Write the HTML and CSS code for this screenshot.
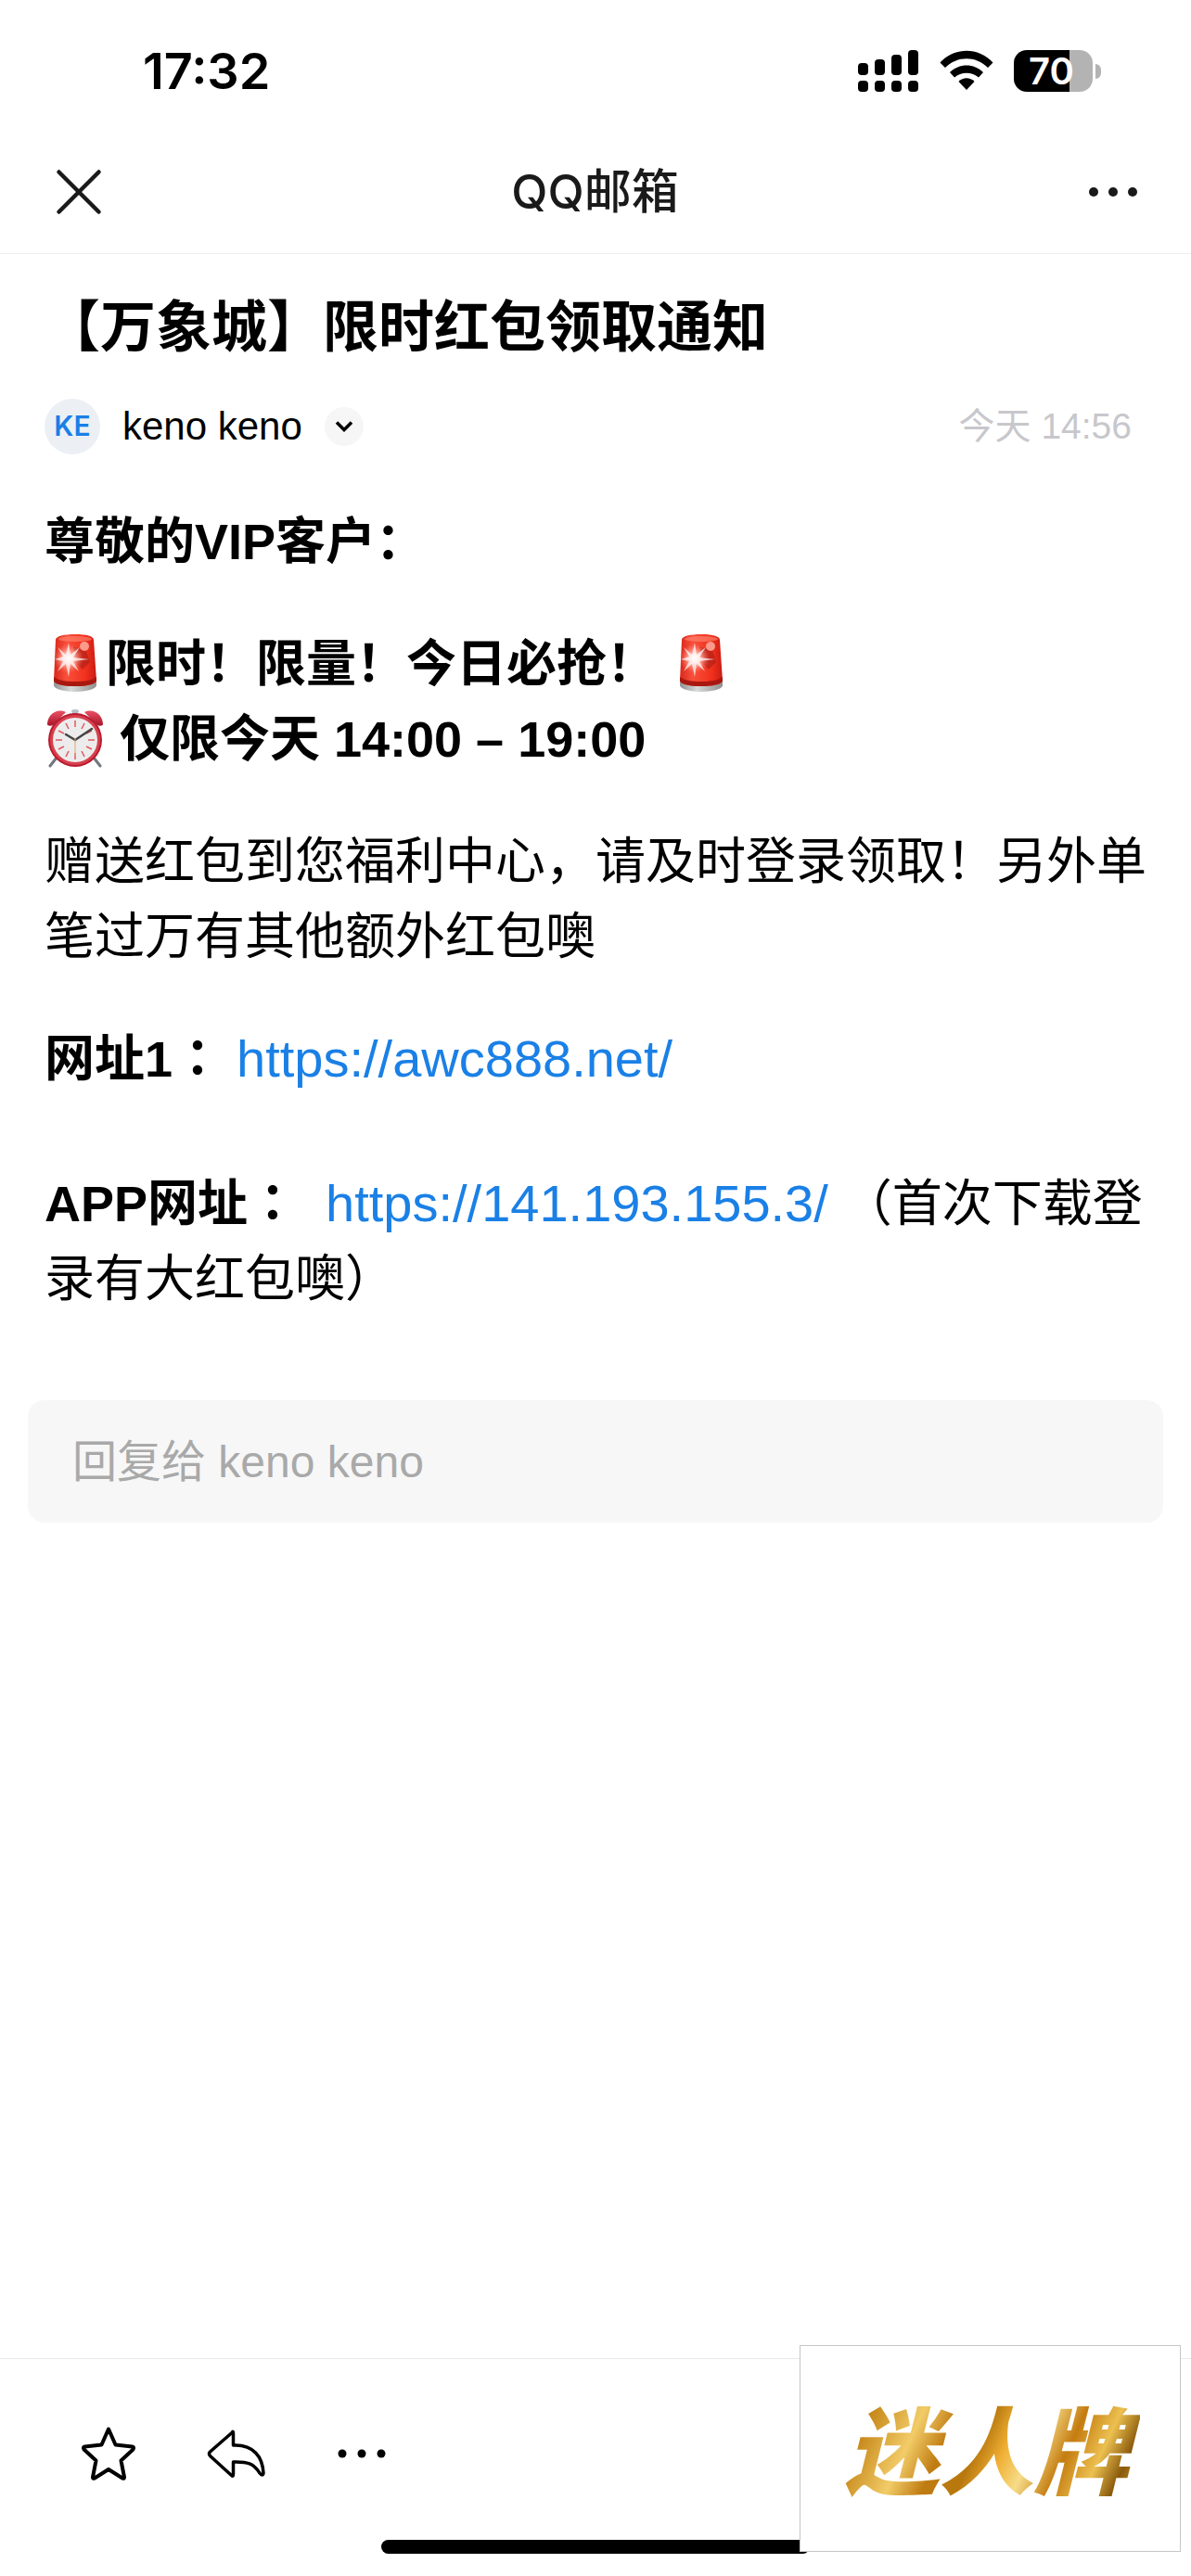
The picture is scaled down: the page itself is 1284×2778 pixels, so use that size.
FILE: index.html
```
<!DOCTYPE html>
<html lang="zh-CN">
<head>
    <meta charset="UTF-8">
    <meta name="viewport" content="width=device-width, initial-scale=1.0">
    <title>QQ邮箱</title>
    <link rel="stylesheet" href="styles.css">
</head>
<body>
    <!-- shared drawings -->
    <svg class="defs" width="0" height="0" aria-hidden="true">
        <defs>
            <linearGradient id="lampRed" x1="0" y1="0" x2="1" y2="0">
                <stop offset="0" stop-color="#d8281c"/>
                <stop offset="0.3" stop-color="#f8503c"/>
                <stop offset="0.75" stop-color="#f0301c"/>
                <stop offset="1" stop-color="#c81c14"/>
            </linearGradient>
            <linearGradient id="lampBase" x1="0" y1="0" x2="1" y2="0">
                <stop offset="0" stop-color="#8e9290"/>
                <stop offset="0.4" stop-color="#d8dad8"/>
                <stop offset="1" stop-color="#8e908e"/>
            </linearGradient>
            <radialGradient id="lampGlow">
                <stop offset="0" stop-color="#fff"/>
                <stop offset="0.3" stop-color="#ffd8d0" stop-opacity="0.9"/>
                <stop offset="1" stop-color="#ff8070" stop-opacity="0"/>
            </radialGradient>
            <linearGradient id="bellRed" x1="0" y1="0" x2="0" y2="1">
                <stop offset="0" stop-color="#ea5264"/>
                <stop offset="1" stop-color="#a81428"/>
            </linearGradient>
            <symbol id="siren" viewBox="0 0 66 64">
                <path d="M10 50v6c0 4 11 7 23 7s23-3 23-7v-6z" fill="url(#lampBase)"/>
                <path d="M12 7c0-4 9-6 21-6s20 2 20 6l3 44c-1 4-11 6-23 6s-22-2-23-6z" fill="url(#lampRed)"/>
                <path d="M10 47c5 4 13 5 23 5s18-1 23-5v4c-1 4-11 6-23 6s-22-2-23-6z" fill="#a81810"/>
                <ellipse cx="33" cy="6" rx="18" ry="3" fill="#ff8a74" opacity="0.6"/>
                <path d="M31 14l14 5 4 12-8 8-6-6z" fill="#9a1a14" opacity="0.5"/>
                <circle cx="43" cy="14" r="5" fill="#ffb4a8" opacity="0.8"/>
                <circle cx="26" cy="27" r="16" fill="url(#lampGlow)"/>
                <path d="M26 10l2 13 10-8-7 11 17 2-17 2 6 11-9-8-2 14-3-14-9 8 6-11-9-2 9-3-6-10 9 8z" fill="#fff" opacity="0.7"/>
            </symbol>
            <symbol id="clock" viewBox="0 0 66 64">
                <path d="M13 53l-7 9M53 53l7 9" stroke="#70777e" stroke-width="3" stroke-linecap="round"/>
                <rect x="30" y="2" width="6" height="6" fill="#9aa2ac"/>
                <ellipse cx="33" cy="3" rx="4" ry="2" fill="#b6bec8"/>
                <path d="M3 17C3 7 13-1 23 4L9 18c-2 1-6 1-6-1zM63 17C63 7 53-1 43 4l14 14c2 1 6 1 6-1z" fill="url(#bellRed)"/>
                <circle cx="33" cy="34" r="29" fill="#b81c30"/>
                <circle cx="33" cy="34" r="27" fill="#d8404e"/>
                <circle cx="33" cy="34" r="24" fill="#ececec"/>
                <path d="M33 13v7M33 48v7M12 34h7M47 34h7M23 16l3 6M43 16l-3 6M23 52l3-6M43 52l-3-6M15 24l6 3M51 24l-6 3M15 44l6-3M51 44l-6-3" stroke="#e45860" stroke-width="1.5"/>
                <path d="M33 34L23 28M33 34l18-12" stroke="#444" stroke-width="2.5" stroke-linecap="round"/>
                <path d="M33 32v19" stroke="#d8a868" stroke-width="1"/>
            </symbol>
        </defs>
    </svg>

    <div class="status-bar">
        <span class="status-time">17:32</span>
        <div class="status-icons">
            <svg width="66" height="46" viewBox="0 0 66 46" aria-hidden="true">
                <rect x="0" y="14" width="11" height="13" rx="4"/>
                <rect x="18" y="10" width="11" height="17" rx="4"/>
                <rect x="36" y="5" width="11" height="22" rx="4"/>
                <rect x="54" y="0" width="11" height="27" rx="4"/>
                <rect x="0" y="33" width="11" height="12" rx="4"/>
                <rect x="18" y="33" width="11" height="12" rx="4"/>
                <rect x="36" y="33" width="11" height="12" rx="4"/>
                <rect x="54" y="33" width="11" height="12" rx="4"/>
            </svg>
            <svg width="58" height="46" viewBox="0 0 58 46" aria-hidden="true">
                <path d="M0.500 13.500C16-3.500 42-3.500 57.500 13.500L52 19C39 6 19 6 6 19z"/>
                <path d="M11 24C21 14 37 14 47 24L42 29.500C35 23 23 23 16 29.500z"/>
                <path d="M20.500 34C25 29 33 29 37.500 34L29 43z"/>
            </svg>
            <div class="battery">
                <span class="battery-body">70</span>
                <span class="battery-cap"></span>
            </div>
        </div>
    </div>

    <header class="nav-bar">
        <button type="button" class="icon-button" aria-label="关闭">
            <svg width="50" height="50" viewBox="0 0 50 50" aria-hidden="true">
                <path d="M3.500 3.500l43 43M46.500 3.500l-43 43" stroke="#1a1a1a" stroke-width="4.500" stroke-linecap="round"/>
            </svg>
        </button>
        <div class="nav-title">QQ邮箱</div>
        <button type="button" class="icon-button" aria-label="更多">
            <svg width="54" height="12" viewBox="0 0 54 12" fill="#1a1a1a" aria-hidden="true">
                <circle cx="6" cy="6" r="5"/><circle cx="27" cy="6" r="5"/><circle cx="48" cy="6" r="5"/>
            </svg>
        </button>
    </header>

    <main class="mail">
        <h1 class="mail-title">【万象城】限时红包领取通知</h1>
        <div class="mail-meta">
            <span class="avatar">KE</span>
            <span class="sender">keno keno</span>
            <button type="button" class="expand-button" aria-label="展开详情">
                <svg width="20" height="14" viewBox="0 0 20 14" aria-hidden="true">
                    <path d="M2 2.500l8 8 8-8" fill="none" stroke="#000" stroke-width="3.500"/>
                </svg>
            </button>
            <time class="mail-time">今天 14:56</time>
        </div>

        <div class="mail-body">
            <p><strong>尊敬的VIP客户：</strong></p>
            <div class="notice">
                <div class="notice-line"><svg class="emoji" aria-hidden="true"><use href="#siren"/></svg>限时！限量！今日必抢！ <svg class="emoji" aria-hidden="true"><use href="#siren"/></svg></div>
                <div class="notice-line"><svg class="emoji" aria-hidden="true"><use href="#clock"/></svg> 仅限今天 14:00 – 19:00</div>
            </div>
            <p>赠送红包到您福利中心，请及时登录领取！另外单笔过万有其他额外红包噢</p>
            <p class="link-line"><strong>网址1<span class="colon" lang="zh-TW">：</span></strong> <a href="https://awc888.net/">https://awc888.net/</a></p>
            <p><strong>APP网址<span class="colon" lang="zh-TW">：</span></strong>&nbsp; <a href="https://141.193.155.3/">https://141.193.155.3/</a> （首次下载登录有大红包噢）</p>
        </div>

        <input type="text" class="reply" placeholder="回复给 keno keno" aria-label="回复给 keno keno">
    </main>

    <footer class="toolbar">
        <div class="tools">
            <button type="button" class="icon-button" aria-label="星标">
                <svg width="60" height="60" viewBox="0 0 60 60" aria-hidden="true">
                    <path d="M30 3.500L37.500 20.500L55.500 22.500Q58 23 56.500 25.500L43.500 37.500L47 55.500Q47 57.500 45 56.500L30 47L15 56.500Q13 57.500 13 55.500L16.500 37.500L3.500 25.500Q2 23 4.500 22.500L22.500 20.500z" fill="none" stroke="#000" stroke-width="4" stroke-linejoin="round"/>
                </svg>
            </button>
            <button type="button" class="icon-button" aria-label="回复">
                <svg width="64" height="54" viewBox="0 0 64 54" aria-hidden="true">
                    <path d="M27 4.500Q28.500 2 28.500 5V18H31C50 18 60 30 61 48Q60 52 57 48C50 37 44 36 28.500 36V49Q28.500 53 26 50L3.500 29.500Q1.500 27 3.500 25z" fill="none" stroke="#000" stroke-width="3.500" stroke-linejoin="round"/>
                </svg>
            </button>
            <button type="button" class="icon-button" aria-label="更多操作">
                <svg width="54" height="12" viewBox="0 0 54 12" aria-hidden="true">
                    <circle cx="6" cy="6" r="4.500"/><circle cx="27" cy="6" r="4.500"/><circle cx="48" cy="6" r="4.500"/>
                </svg>
            </button>
        </div>
        <div class="home-indicator"></div>
        <div class="watermark"><span>迷人牌</span></div>
    </footer>
</body>
</html>
```
FILE: styles.css
```
* {
    box-sizing: border-box;
}
body {
    margin: 0;
    min-height: 100vh;
    display: flex;
    flex-direction: column;
    background: #fff;
    color: #000;
    font-family: "Liberation Sans", "Noto Sans CJK SC", sans-serif;
}
button {
    padding: 0;
    border: none;
    background: none;
    cursor: pointer;
}
svg {
    display: block;
}
.defs {
    position: absolute;
}
.icon-button {
    display: flex;
    align-items: center;
    justify-content: center;
}

/* Status bar */
.status-bar {
    height: 141px;
    padding: 12px 97px 0 154px;
    display: flex;
    align-items: center;
    justify-content: space-between;
}
.status-time {
    font: 600 54px/60px Inter, sans-serif;
}
.status-icons {
    display: flex;
    align-items: center;
    gap: 22px;
}
.battery {
    display: flex;
    align-items: center;
    gap: 3px;
}
.battery-body {
    width: 85px;
    height: 45px;
    border-radius: 14px;
    background: linear-gradient(to right, #000 71%, #b3b3b3 71%);
    color: #fff;
    font: 600 40px/45px Inter, sans-serif;
    text-align: center;
    padding-right: 4px;
}
.battery-cap {
    width: 6px;
    height: 16px;
    border-radius: 0 8px 8px 0;
    background: #b3b3b3;
}

/* Title bar */
.nav-bar {
    height: 133px;
    padding: 0 57px 0 60px;
    display: flex;
    align-items: center;
    justify-content: space-between;
    border-bottom: 1px solid #ededed;
}
.nav-title {
    font: 500 51px/60px Inter, "Noto Sans CJK SC", sans-serif;
    color: #1a1a1a;
}

/* Mail */
.mail {
    flex: 1;
    padding: 36px 30px;
}
.mail-title {
    margin: 0 18px;
    font-size: 60px;
    line-height: 88px;
    font-weight: 700;
}
.mail-meta {
    display: flex;
    align-items: center;
    margin: 32px 34px 0 18px;
}
.avatar {
    width: 60px;
    height: 60px;
    border-radius: 50%;
    background: #ecf0f5;
    color: #1a7fe6;
    font: 600 30px/58px Inter, sans-serif;
    text-align: center;
}
.sender {
    margin-left: 24px;
    font-size: 42px;
    line-height: 60px;
}
.expand-button {
    width: 42px;
    height: 42px;
    margin-left: 24px;
    border-radius: 50%;
    background: #f6f6f6;
    display: flex;
    align-items: center;
    justify-content: center;
}
.mail-time {
    margin-left: auto;
    color: #c7c7cc;
    font-size: 39px;
    line-height: 60px;
}
.mail-body {
    margin: 54px 18px 0;
    font-size: 54px;
    line-height: 81px;
}
.mail-body p,
.notice {
    margin: 0 0 51px;
}
.notice {
    font-weight: 700;
}
.mail-body .link-line {
    margin-bottom: 75px;
}
.mail-body a {
    color: #1a80e6;
    font-size: 56px;
    line-height: 1;
    text-decoration: none;
}
.colon {
    font-family: "Noto Sans CJK TC", sans-serif;
    line-height: 1;
}
.emoji {
    display: inline-block;
    width: 66px;
    height: 64px;
    vertical-align: -12px;
}
.reply {
    display: block;
    width: 100%;
    height: 132px;
    margin-top: 90px;
    padding: 0 48px;
    border: none;
    border-radius: 18px;
    background: #f7f7f7;
    font: 48px/60px "Liberation Sans", "Noto Sans CJK SC", sans-serif;
}
.reply::placeholder {
    color: #a9a9a9;
    opacity: 1;
}

/* Bottom bar */
.toolbar {
    position: relative;
    border-top: 1px solid #e8e8e8;
    padding: 72px 0 24px;
}
.tools {
    display: flex;
    align-items: center;
    gap: 76px;
    padding: 0 87px;
    height: 60px;
}
.home-indicator {
    width: 36%;
    height: 15px;
    margin: 63px auto 0;
    border-radius: 8px;
    background: #000;
}
.watermark {
    position: absolute;
    right: 11px;
    bottom: 26px;
    width: 411px;
    height: 223px;
    border: 1px solid #c6c6c6;
    background: #fff;
    display: flex;
    align-items: center;
    justify-content: center;
}
.watermark span {
    padding: 0 12px 6px 4px;
    font: italic 900 102px/120px "Noto Sans CJK SC", sans-serif;
    background: linear-gradient(115deg, #9a6410, #c88a1c 12%, #f2cc68 26%, #c07c12 36%, #b8780e 46%, #f0b034 54%, #f6dc88 62%, #c47c10 72%, #ecc050 82%, #8a5a0c 90%, #e0b040);
    -webkit-background-clip: text;
    background-clip: text;
    color: transparent;
}
```
